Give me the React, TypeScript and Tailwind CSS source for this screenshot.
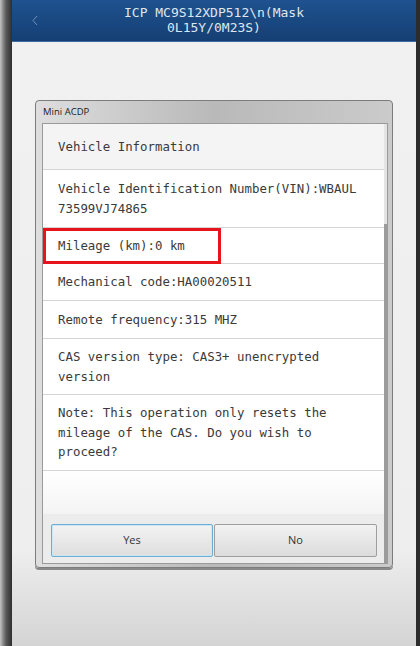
const mono = { fontFamily: '"DejaVu Sans Mono", "Liberation Mono", monospace' };

function Row({ children, className = "" }: { children: React.ReactNode; className?: string }) {
  return (
    <div className={`border-b border-[#d4d4d4] px-[15px] text-[12.4px] leading-[19.5px] text-[#3a3a3a] ${className}`} style={mono}>
      {children}
    </div>
  );
}

export default function App() {
  return (
    <div className="flex h-[646px] w-[420px] overflow-hidden bg-[#efefef]">
      <div className="w-[12px] bg-gradient-to-r from-[#c4c4c4] via-[#5a5a5a] to-[#2e2e2e]" />

      <div className="flex flex-1 flex-col bg-gradient-to-b from-[#f1f1f1] via-[#eeeeee] via-85% to-[#d4d4d4]">
        <header className="relative flex h-[42px] items-center justify-center border-b border-[#3d6aa3] bg-gradient-to-b from-[#1f528f] to-[#153f74]">
          <svg className="absolute left-[20px] top-[15px]" width="6" height="11" viewBox="0 0 6 11">
            <polyline points="5,1 1,5.5 5,10" fill="none" stroke="#6d8fb8" strokeWidth="1" />
          </svg>
          <div className="-mt-[2px] text-center text-[13px] leading-[15px] text-[#dfe6ef]" style={mono}>
            ICP MC9S12XDP512\n(Mask
            <br />
            0L15Y/0M23S)
          </div>
        </header>

        <div className="px-[23px] pt-[58px]">
          <div className="rounded-[4px] border border-[#7c7c7c] bg-gradient-to-r from-[#dedede] via-[#b9b9b9] to-[#cbcbcb] p-[1px] shadow-[0_2px_0_#8a8a8a]">
            <div
              className="flex h-[21px] items-center pl-[6px] text-[9.5px] text-[#222]"
              style={{ fontFamily: '"Open Sans", "Liberation Sans", sans-serif' }}
            >
              Mini ACDP
            </div>
            <div className="ml-[5px] mr-[3px] mb-[2px] flex border border-[#9a9a9a]">
              <div className="flex-1 bg-white">
                <Row className="flex h-[46px] items-center bg-[#f4f4f4]">Vehicle Information</Row>
                <Row className="py-[9px]">
                  Vehicle Identification Number(VIN):WBAUL
                  <br />
                  73599VJ74865
                </Row>
                <Row className="relative flex h-[36px] items-center">
                  <div className="absolute left-[0px] top-[0px] h-[36px] w-[178px] border-[3px] border-[#e8141b]" />
                  Mileage (km):0 km
                </Row>
                <Row className="flex h-[37px] items-center">Mechanical code:HA00020511</Row>
                <Row className="flex h-[38px] items-center">Remote frequency:315 MHZ</Row>
                <Row className="py-[8px]">
                  CAS version type: CAS3+ unencrypted
                  <br />
                  version
                </Row>
                <Row className="py-[8px]">
                  Note: This operation only resets the
                  <br />
                  mileage of the CAS. Do you wish to
                  <br />
                  proceed?
                </Row>
                <div className="h-[43px] bg-gradient-to-b from-white to-[#f4f4f4]" />
                <div
                  className="flex h-[49px] items-start bg-[#ececec] pl-[8px] pt-[10px] text-[11px] text-[#333]"
                  style={{ fontFamily: '"Open Sans", "Liberation Sans", sans-serif' }}
                >
                  <button className="flex h-[33px] w-[162px] items-center justify-center rounded-[2px] border border-[#6aaed6] bg-gradient-to-b from-[#f3f3f3] to-[#dedede] shadow-[inset_0_0_0_1px_#cfe6f4]">
                    Yes
                  </button>
                  <button className="ml-[1px] flex h-[33px] w-[163px] items-center justify-center rounded-[2px] border border-[#9e9e9e] bg-gradient-to-b from-[#f2f2f2] to-[#dcdcdc]">
                    No
                  </button>
                </div>
              </div>
              <div className="flex w-[3px] flex-col">
                <div className="h-[100px] bg-[#e4e4e4]" />
                <div className="flex-1 bg-[#9c9c9c]" />
              </div>
            </div>
          </div>
        </div>
      </div>

      <div className="w-[4px] bg-[#2c2c2c]" />
    </div>
  );
}
